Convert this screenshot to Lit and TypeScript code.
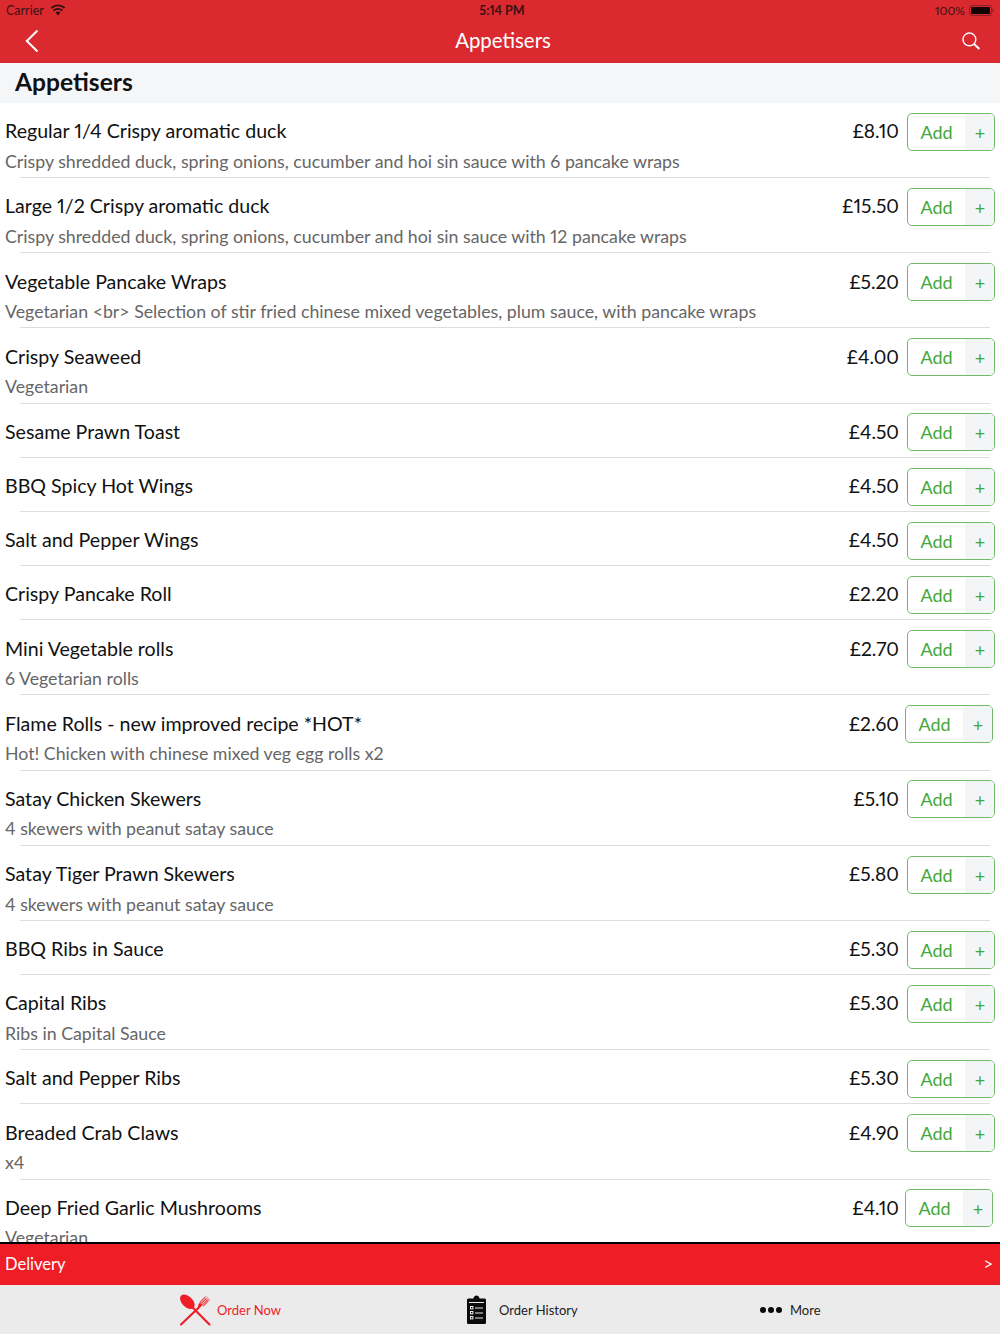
import { LitElement, html, css, svg } from "lit";
import { customElement } from "lit/decorators.js";

interface Item {
  name: string;
  price: string;
  desc?: string;
  nudge?: boolean;
}

const ITEMS: Item[] = [
  { name: "Regular 1/4 Crispy aromatic duck", price: "£8.10", desc: "Crispy shredded duck, spring onions, cucumber and hoi sin sauce with 6 pancake wraps" },
  { name: "Large 1/2 Crispy aromatic duck", price: "£15.50", desc: "Crispy shredded duck, spring onions, cucumber and hoi sin sauce with 12 pancake wraps" },
  { name: "Vegetable Pancake Wraps", price: "£5.20", desc: "Vegetarian <br> Selection of stir fried chinese mixed vegetables, plum sauce, with pancake wraps" },
  { name: "Crispy Seaweed", price: "£4.00", desc: "Vegetarian" },
  { name: "Sesame Prawn Toast", price: "£4.50" },
  { name: "BBQ Spicy Hot Wings", price: "£4.50" },
  { name: "Salt and Pepper Wings", price: "£4.50" },
  { name: "Crispy Pancake Roll", price: "£2.20" },
  { name: "Mini Vegetable rolls", price: "£2.70", desc: "6 Vegetarian rolls" },
  { name: "Flame Rolls - new improved recipe *HOT*", price: "£2.60", desc: "Hot! Chicken with chinese mixed veg egg rolls x2", nudge: true },
  { name: "Satay Chicken Skewers", price: "£5.10", desc: "4 skewers with peanut satay sauce" },
  { name: "Satay Tiger Prawn Skewers", price: "£5.80", desc: "4 skewers with peanut satay sauce" },
  { name: "BBQ Ribs in Sauce", price: "£5.30" },
  { name: "Capital Ribs", price: "£5.30", desc: "Ribs in Capital Sauce" },
  { name: "Salt and Pepper Ribs", price: "£5.30" },
  { name: "Breaded Crab Claws", price: "£4.90", desc: "x4" },
  { name: "Deep Fried Garlic Mushrooms", price: "£4.10", desc: "Vegetarian", nudge: true },
];

const wifiIcon = svg`<svg width="16" height="12" viewBox="0 0 16 12"><path d="M8 11.5 L5.6 8.6 A3.8 3.8 0 0 1 10.4 8.6 Z" fill="#2b1012"/><path d="M3.6 6.6 A6.6 6.6 0 0 1 12.4 6.6 M1.4 4 A9.8 9.8 0 0 1 14.6 4" fill="none" stroke="#2b1012" stroke-width="1.7"/></svg>`;

const batteryIcon = svg`<svg width="25" height="11" viewBox="0 0 25 11"><rect x="0.5" y="0.5" width="22" height="10" rx="2.2" fill="none" stroke="#8a2024"/><rect x="2" y="2" width="19" height="7" rx="0.8" fill="#120305"/><rect x="23.4" y="3.6" width="1.2" height="3.5" fill="#8a2024"/></svg>`;

const backIcon = svg`<svg width="14" height="24" viewBox="0 0 14 24"><path d="M12.5 1.5 L1.8 12 L12.5 22.5" fill="none" stroke="#fff" stroke-width="2"/></svg>`;

const searchIcon = svg`<svg width="20" height="20" viewBox="0 0 20 20"><circle cx="8.4" cy="8.4" r="6.4" fill="none" stroke="#fff" stroke-width="1.4"/><path d="M13 13 L18.4 18" stroke="#fff" stroke-width="2" fill="none"/></svg>`;

const cutleryIcon = svg`<svg width="31" height="32" viewBox="0 0 32 33">
  <ellipse cx="7.6" cy="8" rx="9" ry="5.6" transform="rotate(45 7.6 8)" fill="#ef1d26"/>
  <path d="M12 13 L30.4 31.4 M1 31.4 L20 13.4" stroke="#ef1d26" stroke-width="2.2" stroke-linecap="round" fill="none"/>
  <path d="M18.4 13.8 C18.6 11.6 19.4 10 20.6 8.8 L23.4 11.6 C22.2 12.8 20.6 13.8 18.4 13.8 Z" fill="#ef1d26" stroke="none"/>
  <g fill="none" stroke="#ef1d26" stroke-width="1.1">
    <path d="M20.4 8.8 L25.4 3.8 M21.6 10 L27 4.8 M22.8 11.2 L28.2 6 M24 12.4 L29.2 7.2" opacity=".85"/>
    <path d="M25 4.2 L27 2 M26.6 5.2 L28.6 3.2 M27.8 6.4 L29.8 4.4 M29 7.4 L31 5.4" opacity=".45"/>
  </g>
</svg>`;

const clipboardIcon = svg`<svg width="19" height="29" viewBox="0 0 19 29">
  <path d="M1.6 3.4 H6.4 C6.8 1.6 8 .4 9.5 .4 C11 .4 12.2 1.6 12.6 3.4 H17.4 C18.3 3.4 19 4.1 19 5 V27.4 C19 28.3 18.3 29 17.4 29 H1.6 C.7 29 0 28.3 0 27.4 V5 C0 4.1 .7 3.4 1.6 3.4 Z" fill="#0b0b0b"/>
  <g fill="none" stroke="#ebebeb">
    <path d="M2 7.5 H17"/>
    <rect x="3.5" y="11.5" width="2.4" height="2.4"/>
    <rect x="3.5" y="16.5" width="2.4" height="2.4"/>
    <rect x="3.5" y="21.5" width="2.4" height="2.4"/>
    <path d="M8 13 H16 M8 18 H16 M8 23 H16"/>
  </g>
</svg>`;

const dotsIcon = svg`<svg width="24" height="8" viewBox="0 0 24 8"><circle cx="4" cy="4" r="3" fill="#0b0b0b"/><circle cx="12" cy="4" r="3" fill="#0b0b0b"/><circle cx="20" cy="4" r="3" fill="#0b0b0b"/></svg>`;

@customElement("app-root")
export class AppRoot extends LitElement {
  static styles = css`
    :host {
      display: flex;
      flex-direction: column;
      height: 1334px;
      overflow: hidden;
      background: #fff;
      font-family: Lato, "Liberation Sans", sans-serif;
      font-variant-numeric: proportional-nums;
      color: #111;
    }

    .status {
      height: 20px;
      background: #da2a30;
      display: grid;
      grid-template-columns: 1fr auto 1fr;
      align-items: center;
      padding: 0 6px;
      font-size: 12.5px;
      color: #3a1214;
    }
    .status-left { display: flex; align-items: center; gap: 6px; }
    .status-right {
      display: flex;
      align-items: center;
      justify-content: flex-end;
      gap: 4px;
      font-size: 12px;
    }
    .status svg { display: block; }
    .clock { font-weight: 700; padding-left: 4px; }

    .nav {
      height: 43px;
      background: #da2a30;
      display: flex;
      align-items: center;
      justify-content: space-between;
      padding: 0 19px 4px 25px;
      box-sizing: border-box;
      color: #fff;
      font-size: 20.4px;
    }
    .nav svg { display: block; margin-top: 3px; }
    .nav-title { padding-left: 6px; }

    .section {
      height: 40px;
      box-sizing: border-box;
      background: #f5f6f8;
      padding-left: 15px;
      font-size: 24.6px;
      font-weight: 700;
      line-height: 38px;
    }

    .list {
      flex: 1;
      min-height: 0;
      overflow: hidden;
    }

    .row {
      display: grid;
      grid-template-columns: 1fr auto auto;
      align-items: center;
      padding: 9.8px 5px 5.36px;
    }
    .name { font-size: 19.6px; margin-top: -2px; }
    .price { font-size: 19.2px; margin-right: 8px; margin-top: -2px; }
    .desc {
      grid-column: 1 / -1;
      height: 21px;
      line-height: 20px;
      font-size: 17.75px;
      color: #666;
    }
    .rule {
      height: 1px;
      margin: 0 10px 0 20px;
      background: #ddd;
    }

    .add {
      width: 88px;
      height: 38px;
      box-sizing: border-box;
      display: flex;
      border: 1px solid #6fbb6a;
      border-radius: 5px;
      overflow: hidden;
      color: #43a83c;
    }
    .add.nudge { transform: translateX(-2px); }
    .add-label {
      flex: 1;
      text-align: center;
      line-height: 36px;
      font-size: 18px;
    }
    .add-plus {
      width: 28px;
      padding-left: 1px;
      text-align: center;
      line-height: 38px;
      font-size: 18px;
      background: #f4f5f7;
    }

    .delivery {
      height: 39px;
      border-top: 2px solid #000;
      background: #ef1d26;
      color: #fff;
      display: flex;
      align-items: center;
      justify-content: space-between;
      padding: 0 7px 2px 5px;
      font-size: 16.5px;
    }

    .tabs {
      height: 49px;
      background: #ebebeb;
      display: grid;
      grid-template-columns: 460px 200px 1fr;
      font-size: 13px;
      color: #222;
    }
    .tab {
      display: flex;
      align-items: center;
      gap: 8px;
    }
    .tab svg { display: block; }
    .tab-order { padding-left: 180px; gap: 6px; color: #ef1d26; }
    .tab-history { padding-left: 7px; gap: 13px; }
    .tab-more { padding-left: 99px; gap: 7px; }
  `;

  renderItem(item: Item) {
    return html`
      <div class="row">
        <div class="name">${item.name}</div>
        <div class="price">${item.price}</div>
        <div class="add ${item.nudge ? "nudge" : ""}">
          <div class="add-label">Add</div>
          <div class="add-plus">+</div>
        </div>
        ${item.desc ? html`<div class="desc">${item.desc}</div>` : ""}
      </div>
      <div class="rule"></div>
    `;
  }

  render() {
    return html`
      <div class="status">
        <div class="status-left"><span>Carrier</span>${wifiIcon}</div>
        <div class="clock">5:14 PM</div>
        <div class="status-right"><span>100%</span>${batteryIcon}</div>
      </div>
      <div class="nav">
        ${backIcon}
        <div class="nav-title">Appetisers</div>
        ${searchIcon}
      </div>
      <div class="section">Appetisers</div>
      <div class="list">${ITEMS.map((item) => this.renderItem(item))}</div>
      <div class="delivery"><span>Delivery</span><span>&gt;</span></div>
      <div class="tabs">
        <div class="tab tab-order">${cutleryIcon}<span>Order Now</span></div>
        <div class="tab tab-history">${clipboardIcon}<span>Order History</span></div>
        <div class="tab tab-more">${dotsIcon}<span>More</span></div>
      </div>
    `;
  }
}
